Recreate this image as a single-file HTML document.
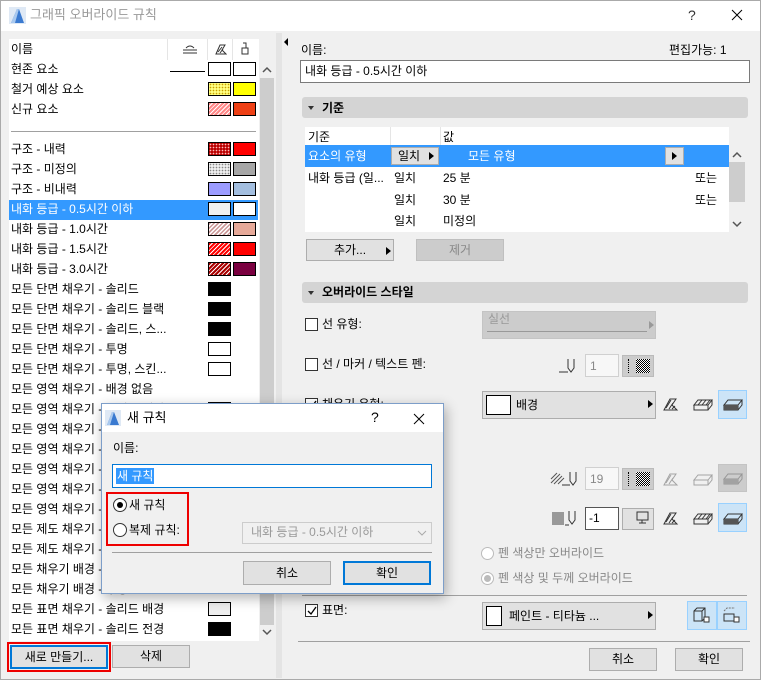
<!DOCTYPE html>
<html><head><meta charset="utf-8">
<style>
*{box-sizing:border-box;margin:0;padding:0}
body{width:761px;height:680px;overflow:hidden;background:#f0f0f0;font-family:"Liberation Sans","Noto Sans CJK KR",sans-serif;font-size:12px;color:#000;position:relative}
.a{position:absolute}
.t{position:absolute;white-space:nowrap;line-height:14px}
.sw{position:absolute;width:23px;height:14px;border:1px solid #000}
.btn{position:absolute;background:#e1e1e1;border:1px solid #adadad;text-align:center;line-height:20px}
.hdr{position:absolute;left:302px;width:446px;height:21px;background:#d4d4d4;border-radius:3px}
.cb{position:absolute;width:13px;height:13px;border:1px solid #333;background:#fff}
.dd{position:absolute;background:#e1e1e1;border:1px solid #adadad}
.tri{position:absolute;width:0;height:0;border-top:4px solid transparent;border-bottom:4px solid transparent;border-left:5px solid #000}
.sel{position:absolute;background:#cce4f7;border:1px solid #99d1ff}
</style></head><body>
<div class="a" style="left:0;top:0;width:761px;height:680px;border:1px solid #aaa"></div>
<div class="a" style="left:1px;top:1px;width:759px;height:30px;background:#fff"></div>
<svg class="a" style="left:9px;top:7px" width="17" height="17"><rect width="17" height="17" fill="#dfe9f5"/><path d="M2 16 L8 2 L10 2 L15 16 Z" fill="#3a7ad0"/><path d="M8 2 L10 2 L6 16 L2 16Z" fill="#a9c9ef"/></svg>
<div class="t" style="left:30px;top:8px;font-size:13px;color:#999">그래픽 오버라이드 규칙</div>
<div class="t" style="left:688px;top:8px;font-size:14px;color:#333">?</div>
<svg class="a" style="left:731px;top:9px" width="12" height="12"><path d="M1 1L11 11M11 1L1 11" stroke="#000" stroke-width="1"/></svg>

<div class="a" style="left:9px;top:39px;width:250px;height:602px;background:#fff"></div>
<div class="t" style="left:11px;top:42px">이름</div>
<div class="a" style="left:167px;top:39px;width:1px;height:21px;background:#e5e5e5"></div>
<div class="a" style="left:207px;top:39px;width:1px;height:21px;background:#e5e5e5"></div>
<div class="a" style="left:232px;top:39px;width:1px;height:21px;background:#e5e5e5"></div>
<svg class="a" style="left:182px;top:43px" width="16" height="12"><path d="M1 10H15M1 7H15M4 5 Q8 1 12 5" stroke="#333" fill="none"/></svg>
<svg class="a" style="left:215px;top:43px" width="12" height="12"><path d="M1 11L5 2H10L7 7L11 11Z" stroke="#333" fill="none"/><path d="M3 9L7 4M5 10L8 6" stroke="#333"/></svg>
<svg class="a" style="left:240px;top:42px" width="10" height="14"><path d="M3 1H6V6M2 6H8V12H2Z" stroke="#333" fill="none"/></svg>
<div class="a" style="left:259px;top:60px;width:16px;height:581px;background:#f0f0f0"></div>
<div class="a" style="left:260px;top:78px;width:14px;height:547px;background:#cdcdcd"></div>
<svg class="a" style="left:262px;top:66px" width="10" height="8"><path d="M1 6L5 2L9 6" stroke="#555" stroke-width="1.5" fill="none"/></svg>
<svg class="a" style="left:262px;top:628px" width="10" height="8"><path d="M1 2L5 6L9 2" stroke="#555" stroke-width="1.5" fill="none"/></svg>
<div class="a" style="left:276px;top:33px;width:6px;height:645px;background:#e4e4e4"></div>
<div class="a" style="left:284px;top:38px;width:0;height:0;border-top:4px solid transparent;border-bottom:4px solid transparent;border-right:4px solid #000"></div>

<div class="t" style="left:11px;top:62px">현존 요소</div>
<div class="a" style="left:170px;top:71px;width:35px;height:1px;background:#000"></div>
<div class="sw" style="left:208px;top:62px;background:#fff"></div><div class="sw" style="left:233px;top:62px;background:#fff"></div>
<div class="t" style="left:11px;top:82px">철거 예상 요소</div>
<div class="sw" style="left:208px;top:82px;background:#ffff80 radial-gradient(#c9a000 0.6px,transparent 1px) 0 0/3px 3px"></div><div class="sw" style="left:233px;top:82px;background:#ffff00"></div>
<div class="t" style="left:11px;top:102px">신규 요소</div>
<div class="sw" style="left:208px;top:102px;background:repeating-linear-gradient(135deg,#f88 0 2px,#fff 2px 3px)"></div><div class="sw" style="left:233px;top:102px;background:#ee4015"></div>
<div class="a" style="left:11px;top:131px;width:245px;height:1px;background:#a0a0a0"></div>
<div class="t" style="left:11px;top:142px">구조 - 내력</div>
<div class="sw" style="left:208px;top:142px;background:#b00 radial-gradient(#fbb 0.6px,transparent 1px) 0 0/3px 3px"></div><div class="sw" style="left:233px;top:142px;background:#f00"></div>
<div class="t" style="left:11px;top:162px">구조 - 미정의</div>
<div class="sw" style="left:208px;top:162px;background:#eee radial-gradient(#888 0.6px,transparent 1px) 0 0/3px 3px"></div><div class="sw" style="left:233px;top:162px;background:#a6a6a6"></div>
<div class="t" style="left:11px;top:182px">구조 - 비내력</div>
<div class="sw" style="left:208px;top:182px;background:#33f radial-gradient(#fff 0.6px,transparent 1px) 0 0/2px 2px"></div><div class="sw" style="left:233px;top:182px;background:#a3bedf"></div>
<div class="a" style="left:9px;top:200px;width:249px;height:20px;background:#3399ff"></div>
<div class="t" style="left:11px;top:202px;color:#fff">내화 등급 - 0.5시간 이하</div>
<div class="sw" style="left:208px;top:202px;background:#f0f0f0"></div><div class="sw" style="left:233px;top:202px;background:#fff"></div>
<div class="t" style="left:11px;top:222px">내화 등급 - 1.0시간</div>
<div class="sw" style="left:208px;top:222px;background:repeating-linear-gradient(135deg,#c99 0 1.5px,#fff 1.5px 3px)"></div><div class="sw" style="left:233px;top:222px;background:#e6a999"></div>
<div class="t" style="left:11px;top:242px">내화 등급 - 1.5시간</div>
<div class="sw" style="left:208px;top:242px;background:repeating-linear-gradient(135deg,#f00 0 2px,#fff 2px 3px)"></div><div class="sw" style="left:233px;top:242px;background:#f00"></div>
<div class="t" style="left:11px;top:262px">내화 등급 - 3.0시간</div>
<div class="sw" style="left:208px;top:262px;background:repeating-linear-gradient(135deg,#a00 0 2px,#fff 2px 3px)"></div><div class="sw" style="left:233px;top:262px;background:#7a0040"></div>
<div class="t" style="left:11px;top:282px">모든 단면 채우기 - 솔리드</div><div class="sw" style="left:208px;top:282px;background:#000"></div>
<div class="t" style="left:11px;top:302px">모든 단면 채우기 - 솔리드 블랙</div><div class="sw" style="left:208px;top:302px;background:#000"></div>
<div class="t" style="left:11px;top:322px">모든 단면 채우기 - 솔리드, 스...</div><div class="sw" style="left:208px;top:322px;background:#000"></div>
<div class="t" style="left:11px;top:342px">모든 단면 채우기 - 투명</div><div class="sw" style="left:208px;top:342px;background:#fff"></div>
<div class="t" style="left:11px;top:362px">모든 단면 채우기 - 투명, 스킨...</div><div class="sw" style="left:208px;top:362px;background:#fff"></div>
<div class="t" style="left:11px;top:382px">모든 영역 채우기 - 배경 없음</div>
<div class="t" style="left:11px;top:402px">모든 영역 채우기 - 솔리드 배경</div><div class="sw" style="left:208px;top:402px;background:#eee"></div>
<div class="t" style="left:11px;top:422px">모든 영역 채우기 -</div>
<div class="t" style="left:11px;top:442px">모든 영역 채우기 -</div>
<div class="t" style="left:11px;top:462px">모든 영역 채우기 -</div>
<div class="t" style="left:11px;top:482px">모든 영역 채우기 -</div>
<div class="t" style="left:11px;top:502px">모든 영역 채우기 -</div>
<div class="t" style="left:11px;top:522px">모든 제도 채우기 -</div>
<div class="t" style="left:11px;top:542px">모든 제도 채우기 -</div>
<div class="t" style="left:11px;top:562px">모든 채우기 배경 -</div>
<div class="t" style="left:11px;top:582px">모든 채우기 배경 - 투명</div>
<div class="t" style="left:11px;top:602px">모든 표면 채우기 - 솔리드 배경</div><div class="sw" style="left:208px;top:602px;background:#eee"></div>
<div class="t" style="left:11px;top:622px">모든 표면 채우기 - 솔리드 전경</div><div class="sw" style="left:208px;top:622px;background:#000"></div>
<div class="a" style="left:7px;top:642px;width:104px;height:30px;border:2px solid #e00"></div>
<div class="btn" style="left:10px;top:645px;width:98px;height:24px;border:2px solid #0078d7;line-height:20px">새로 만들기...</div>
<div class="btn" style="left:112px;top:645px;width:78px;height:23px">삭제</div>

<div class="t" style="left:301px;top:43px">이름:</div>
<div class="t" style="left:669px;top:43px">편집가능: 1</div>
<div class="a" style="left:300px;top:60px;width:450px;height:23px;background:#fff;border:1px solid #7a7a7a"></div>
<div class="t" style="left:305px;top:64px">내화 등급 - 0.5시간 이하</div>
<div class="hdr" style="top:97px"></div>
<div class="a" style="left:308px;top:106px;border-left:3.5px solid transparent;border-right:3.5px solid transparent;border-top:4px solid #333"></div>
<div class="t" style="left:322px;top:101px;font-weight:bold">기준</div>
<div class="a" style="left:305px;top:127px;width:424px;height:105px;background:#fff"></div>
<div class="a" style="left:390px;top:127px;width:1px;height:20px;background:#e5e5e5"></div>
<div class="a" style="left:440px;top:127px;width:1px;height:20px;background:#e5e5e5"></div>
<div class="t" style="left:308px;top:130px">기준</div>
<div class="t" style="left:443px;top:130px">값</div>
<div class="a" style="left:305px;top:145px;width:424px;height:22px;background:#3399ff"></div>
<div class="t" style="left:308px;top:149px;color:#fff">요소의 유형</div>
<div class="a" style="left:391px;top:147px;width:48px;height:18px;background:#e1e1e1;border:1px solid #adadad"></div>
<div class="t" style="left:398px;top:149px">일치</div>
<div class="tri" style="left:429px;top:152px"></div>
<div class="t" style="left:468px;top:149px;color:#fff">모든 유형</div>
<div class="a" style="left:665px;top:147px;width:19px;height:18px;background:#e1e1e1;border:1px solid #adadad"></div>
<div class="tri" style="left:672px;top:152px"></div>
<div class="t" style="left:308px;top:171px">내화 등급 (일...</div>
<div class="t" style="left:394px;top:171px">일치</div><div class="t" style="left:443px;top:171px">25 분</div><div class="t" style="left:695px;top:171px">또는</div>
<div class="t" style="left:394px;top:193px">일치</div><div class="t" style="left:443px;top:193px">30 분</div><div class="t" style="left:695px;top:193px">또는</div>
<div class="t" style="left:394px;top:214px">일치</div><div class="t" style="left:443px;top:214px">미정의</div>
<div class="a" style="left:729px;top:162px;width:16px;height:40px;background:#cdcdcd"></div>
<svg class="a" style="left:732px;top:151px" width="10" height="8"><path d="M1 6L5 2L9 6" stroke="#555" stroke-width="1.5" fill="none"/></svg>
<svg class="a" style="left:732px;top:220px" width="10" height="8"><path d="M1 2L5 6L9 2" stroke="#555" stroke-width="1.5" fill="none"/></svg>
<div class="btn" style="left:306px;top:239px;width:88px;height:22px">추가...</div>
<div class="tri" style="left:386px;top:247px"></div>
<div class="btn" style="left:416px;top:239px;width:88px;height:22px;background:#ccc;border-color:#bfbfbf;color:#888">제거</div>
<div class="hdr" style="top:282px"></div>
<div class="a" style="left:308px;top:291px;border-left:3.5px solid transparent;border-right:3.5px solid transparent;border-top:4px solid #333"></div>
<div class="t" style="left:322px;top:285px;font-weight:bold">오버라이드 스타일</div>

<div class="cb" style="left:305px;top:318px"></div>
<div class="t" style="left:322px;top:317px">선 유형:</div>
<div class="a" style="left:482px;top:311px;width:174px;height:28px;background:#ccc;border:1px solid #c4c4c4"></div>
<div class="t" style="left:488px;top:312px;color:#999">실선</div>
<div class="a" style="left:487px;top:331px;width:160px;height:1px;background:#999"></div>
<div class="tri" style="left:649px;top:321px;border-left-color:#999"></div>
<div class="cb" style="left:305px;top:358px"></div>
<div class="t" style="left:322px;top:357px">선 / 마커 / 텍스트 펜:</div>
<svg class="a" style="left:558px;top:357px" width="22" height="17"><path d="M1 15H10M10 2V11L13 15L16 11V2" stroke="#333" fill="none"/></svg>
<div class="a" style="left:585px;top:354px;width:34px;height:23px;background:#f7f7f7;border:1px solid #d0d0d0"></div>
<div class="t" style="left:590px;top:359px;color:#888">1</div>
<div class="a" style="left:622px;top:355px;width:32px;height:22px;background:#ccc;border:1px solid #bbb"></div>
<div class="a" style="left:628px;top:359px;width:1px;height:14px;border-left:1px dotted #000"></div>
<div class="a" style="left:636px;top:359px;width:14px;height:14px;background:repeating-conic-gradient(#000 0 25%,#fff 0 50%) 0 0/2px 2px"></div>
<div class="cb" style="left:305px;top:398px"></div>
<svg class="a" style="left:306px;top:399px" width="12" height="12"><path d="M2 6L5 9L10 2" stroke="#000" fill="none" stroke-width="1.3"/></svg>
<div class="t" style="left:322px;top:397px">채우기 유형:</div>
<div class="dd" style="left:482px;top:391px;width:174px;height:28px"></div>
<div class="a" style="left:486px;top:395px;width:25px;height:20px;background:#fff;border:1px solid #000"></div>
<div class="t" style="left:516px;top:398px">배경</div>
<div class="tri" style="left:648px;top:400px"></div>
<svg class="a" style="left:662px;top:396px" width="22" height="16"><path d="M2 14L8 3H14L10 9L15 14Z" stroke="#333" fill="none"/><path d="M4 12L9 4M7 13L11 7M10 13L13 10" stroke="#333"/></svg>
<svg class="a" style="left:692px;top:396px" width="22" height="16"><path d="M2 9L6 4H20L16 9ZM2 9H16V14H2ZM16 14L20 9V4" stroke="#333" fill="none"/><path d="M6 9L10 4M10 9L14 4M14 9L18 4" stroke="#333"/></svg>
<div class="sel" style="left:718px;top:390px;width:29px;height:29px"></div>
<svg class="a" style="left:722px;top:396px" width="22" height="16"><path d="M2 9L6 4H20L16 9ZM2 9H16V14H2ZM16 14L20 9V4" stroke="#333" fill="none"/><rect x="2" y="9" width="14" height="5" fill="#555"/></svg>

<svg class="a" style="left:550px;top:470px" width="30" height="17"><path d="M1 9L7 3M1 13L10 4M4 14L12 6M8 14L14 8" stroke="#555"/><path d="M12 15H20M20 2V11L23 15L26 11V2" stroke="#333" fill="none"/></svg>
<div class="a" style="left:585px;top:467px;width:34px;height:23px;background:#f7f7f7;border:1px solid #d0d0d0"></div>
<div class="t" style="left:590px;top:472px;color:#888">19</div>
<div class="a" style="left:622px;top:468px;width:32px;height:22px;background:#ccc;border:1px solid #bbb"></div>
<div class="a" style="left:628px;top:472px;width:1px;height:14px;border-left:1px dotted #000"></div>
<div class="a" style="left:636px;top:472px;width:14px;height:14px;background:repeating-conic-gradient(#000 0 25%,#fff 0 50%) 0 0/2px 2px"></div>
<svg class="a" style="left:662px;top:471px;opacity:.4" width="22" height="16"><path d="M2 14L8 3H14L10 9L15 14Z" stroke="#333" fill="none"/><path d="M4 12L9 4M7 13L11 7" stroke="#333"/></svg>
<svg class="a" style="left:692px;top:471px;opacity:.4" width="22" height="16"><path d="M2 9L6 4H20L16 9ZM2 9H16V14H2ZM16 14L20 9V4" stroke="#333" fill="none"/></svg>
<div class="a" style="left:718px;top:464px;width:29px;height:28px;background:#ccc;border:1px solid #c4c4c4"></div>
<svg class="a" style="left:722px;top:470px;opacity:.35" width="22" height="16"><path d="M2 9L6 4H20L16 9ZM2 9H16V14H2ZM16 14L20 9V4" stroke="#333" fill="none"/><rect x="2" y="9" width="14" height="5" fill="#555"/></svg>
<div class="a" style="left:552px;top:512px;width:12px;height:13px;background:#999"></div>
<svg class="a" style="left:564px;top:509px" width="18" height="18"><path d="M1 16H5M5 2V11L8 15L11 11V2" stroke="#333" fill="none"/></svg>
<div class="a" style="left:585px;top:507px;width:34px;height:23px;background:#fff;border:1px solid #555"></div>
<div class="t" style="left:589px;top:511px">-1</div>
<div class="a" style="left:622px;top:508px;width:32px;height:22px;background:#e1e1e1;border:1px solid #adadad"></div>
<svg class="a" style="left:636px;top:511px" width="14" height="14"><rect x="1" y="1" width="11" height="8" fill="none" stroke="#333"/><path d="M6 9V12M3 12H10" stroke="#333"/></svg>
<svg class="a" style="left:662px;top:510px" width="22" height="16"><path d="M2 14L8 3H14L10 9L15 14Z" stroke="#333" fill="none"/><path d="M4 12L9 4M7 13L11 7M10 13L13 10" stroke="#333"/></svg>
<svg class="a" style="left:692px;top:510px" width="22" height="16"><path d="M2 9L6 4H20L16 9ZM2 9H16V14H2ZM16 14L20 9V4" stroke="#333" fill="none"/><path d="M6 9L10 4M10 9L14 4M14 9L18 4" stroke="#333"/></svg>
<div class="sel" style="left:718px;top:503px;width:29px;height:29px"></div>
<svg class="a" style="left:722px;top:510px" width="22" height="16"><path d="M2 9L6 4H20L16 9ZM2 9H16V14H2ZM16 14L20 9V4" stroke="#333" fill="none"/><rect x="2" y="9" width="14" height="5" fill="#555"/></svg>
<div class="a" style="left:481px;top:547px;width:13px;height:13px;border:1px solid #bbb;border-radius:50%;background:#fff"></div>
<div class="t" style="left:498px;top:546px;color:#888">펜 색상만 오버라이드</div>
<div class="a" style="left:481px;top:572px;width:13px;height:13px;border:1px solid #bbb;border-radius:50%;background:#fff"></div>
<div class="a" style="left:484px;top:575px;width:7px;height:7px;border-radius:50%;background:#bbb"></div>
<div class="t" style="left:498px;top:571px;color:#888">펜 색상 및 두께 오버라이드</div>
<div class="a" style="left:302px;top:595px;width:445px;height:1px;background:#a0a0a0"></div>
<div class="cb" style="left:305px;top:604px"></div>
<svg class="a" style="left:306px;top:605px" width="12" height="12"><path d="M2 6L5 9L10 2" stroke="#000" fill="none" stroke-width="1.3"/></svg>
<div class="t" style="left:322px;top:603px">표면:</div>
<div class="dd" style="left:482px;top:602px;width:174px;height:28px"></div>
<div class="a" style="left:486px;top:606px;width:16px;height:20px;background:#fff;border:1px solid #000"></div>
<div class="t" style="left:509px;top:609px">페인트 - 티타늄 ...</div>
<div class="tri" style="left:648px;top:611px"></div>
<div class="sel" style="left:687px;top:601px;width:30px;height:29px"></div>
<div class="sel" style="left:717px;top:601px;width:30px;height:29px"></div>
<svg class="a" style="left:692px;top:605px" width="20" height="20"><path d="M2 6L5 3H13V13L10 16H2Z M2 6H10V16 M10 6L13 3" stroke="#333" fill="none"/><rect x="12" y="12" width="5" height="5" fill="#fff" stroke="#333"/></svg>
<svg class="a" style="left:722px;top:605px" width="20" height="20"><path d="M2 6L5 3H13" stroke="#777" stroke-dasharray="2 1" fill="none"/><path d="M2 9H12V16H2Z" stroke="#333" fill="none"/><rect x="12" y="12" width="5" height="5" fill="#fff" stroke="#333"/></svg>
<div class="a" style="left:298px;top:641px;width:452px;height:1px;background:#a0a0a0"></div>
<div class="btn" style="left:589px;top:648px;width:68px;height:23px">취소</div>
<div class="btn" style="left:675px;top:648px;width:68px;height:23px">확인</div>

<div class="a" style="left:101px;top:403px;width:343px;height:191px;background:#f0f0f0;border:1px solid #7d9ec9;box-shadow:2px 4px 12px rgba(0,0,0,.3)"></div>
<div class="a" style="left:102px;top:404px;width:341px;height:28px;background:#fff"></div>
<svg class="a" style="left:105px;top:410px" width="16" height="16"><rect width="16" height="16" fill="#dfe9f5"/><path d="M2 15L7 2H9L14 15Z" fill="#3a7ad0"/><path d="M7 2H9L5 15H2Z" fill="#a9c9ef"/></svg>
<div class="t" style="left:127px;top:411px;font-size:13px">새 규칙</div>
<div class="t" style="left:371px;top:410px;font-size:14px">?</div>
<svg class="a" style="left:413px;top:413px" width="12" height="12"><path d="M1 1L11 11M11 1L1 11" stroke="#000"/></svg>
<div class="t" style="left:113px;top:441px">이름:</div>
<div class="a" style="left:112px;top:464px;width:320px;height:24px;background:#fff;border:1px solid #0078d7"></div>
<div class="a" style="left:116px;top:468px;width:38px;height:16px;background:#3399ff"></div>
<div class="t" style="left:117px;top:469px;color:#fff">새 규칙</div>
<div class="a" style="left:106px;top:492px;width:83px;height:54px;border:2px solid #e00"></div>
<div class="a" style="left:113px;top:498px;width:14px;height:14px;border:1px solid #333;border-radius:50%;background:#fff"></div>
<div class="a" style="left:117px;top:502px;width:6px;height:6px;border-radius:50%;background:#000"></div>
<div class="t" style="left:129px;top:498px">새 규칙</div>
<div class="a" style="left:113px;top:523px;width:14px;height:14px;border:1px solid #333;border-radius:50%;background:#fff"></div>
<div class="t" style="left:129px;top:523px">복제 규칙:</div>
<div class="a" style="left:242px;top:522px;width:190px;height:22px;background:#f0f0f0;border:1px solid #ccc"></div>
<div class="t" style="left:251px;top:525px;color:#999">내화 등급 - 0.5시간 이하</div>
<svg class="a" style="left:417px;top:529px" width="10" height="8"><path d="M1 2L5 6L9 2" stroke="#aaa" fill="none"/></svg>
<div class="a" style="left:112px;top:552px;width:320px;height:1px;background:#a0a0a0"></div>
<div class="btn" style="left:243px;top:561px;width:88px;height:24px;line-height:22px">취소</div>
<div class="btn" style="left:343px;top:561px;width:88px;height:24px;border:2px solid #0078d7">확인</div>
</body></html>
